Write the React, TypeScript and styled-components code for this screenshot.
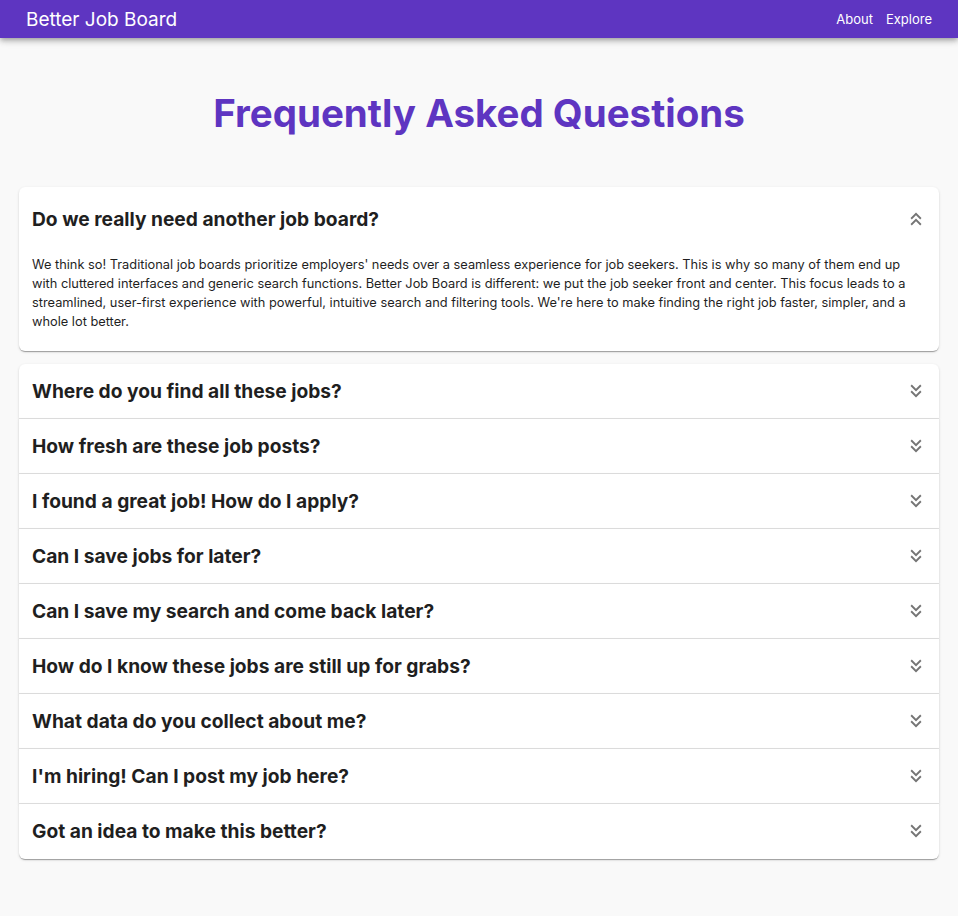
import { useState } from "react";
import styled, { createGlobalStyle } from "styled-components";

const GlobalStyle = createGlobalStyle`
  body {
    margin: 0;
    background: #f9f9f9;
    font-family: Inter, "Noto Sans", sans-serif;
    color: #1f1f1f;
  }
`;

const TopBar = styled.header`
  height: 38px;
  background: #5e35c1;
  color: #fff;
  display: flex;
  align-items: center;
  justify-content: space-between;
  padding: 0 26px;
  box-shadow: 0 2px 4px -1px rgba(0, 0, 0, 0.2), 0 4px 5px 0 rgba(0, 0, 0, 0.14),
    0 1px 10px 0 rgba(0, 0, 0, 0.12);
  position: relative;
  z-index: 2;
`;

const Brand = styled.div`
  font-size: 19px;
  font-weight: 400;
`;

const Nav = styled.nav`
  display: flex;
  gap: 13px;
  font-size: 13px;
`;

const NavLink = styled.a`
  color: #fff;
  text-decoration: none;
`;

const Main = styled.main`
  padding: 0 19px 40px;
`;

const Heading = styled.h1`
  margin: 0;
  padding: 52px 0 51px;
  text-align: center;
  color: #5e35c1;
  font-size: 38.5px;
  font-weight: 700;
  line-height: 46px;
`;

const List = styled.div`
  display: flex;
  flex-direction: column;
`;

const Panel = styled.div<{ $open: boolean; $first: boolean; $last: boolean }>`
  background: #fff;
  position: relative;
  box-shadow: 0 2px 1px -1px rgba(0, 0, 0, 0.2), 0 1px 1px 0 rgba(0, 0, 0, 0.14),
    0 1px 3px 0 rgba(0, 0, 0, 0.12);
  border-radius: ${(p) =>
    p.$open ? "6px" : p.$first && p.$last ? "6px" : p.$first ? "6px 6px 0 0" : p.$last ? "0 0 6px 6px" : "0"};
  margin-bottom: ${(p) => (p.$open ? "13px" : "0")};

  &::before {
    content: "";
    position: absolute;
    left: 0;
    right: 0;
    top: -1px;
    height: 1px;
    background: rgba(0, 0, 0, 0.12);
    display: ${(p) => (p.$first || p.$open ? "none" : "block")};
  }
`;

const Summary = styled.button<{ $open: boolean }>`
  all: unset;
  box-sizing: border-box;
  width: 100%;
  display: flex;
  align-items: center;
  justify-content: space-between;
  padding: 0 12px 2px 13px;
  height: ${(p) => (p.$open ? "66px" : "55px")};
  cursor: pointer;
`;

const Question = styled.span`
  font-size: 19.2px;
  font-weight: 700;
  color: #1f1f1f;
`;

const Answer = styled.div`
  padding: 2px 19px 20px 13px;
  font-size: 12.8px;
  line-height: 19px;
  color: #1f1f1f;
`;

const Chevrons = ({ up }: { up: boolean }) => (
  <svg width="22" height="22" viewBox="0 0 24 24" fill="#757575">
    {up ? (
      <path d="M6 17.59 7.41 19 12 14.42 16.59 19 18 17.59l-6-6z M6 11l1.41 1.41L12 7.83l4.59 4.58L18 11l-6-6z" />
    ) : (
      <path d="M18 6.41 16.59 5 12 9.58 7.41 5 6 6.41l6 6z M18 13l-1.41-1.41L12 16.170l-4.59-4.58L6 13l6 6z" />
    )}
  </svg>
);

const faqs = [
  {
    q: "Do we really need another job board?",
    a: "We think so! Traditional job boards prioritize employers' needs over a seamless experience for job seekers. This is why so many of them end up with cluttered interfaces and generic search functions. Better Job Board is different: we put the job seeker front and center. This focus leads to a streamlined, user-first experience with powerful, intuitive search and filtering tools. We're here to make finding the right job faster, simpler, and a whole lot better.",
  },
  { q: "Where do you find all these jobs?", a: "" },
  { q: "How fresh are these job posts?", a: "" },
  { q: "I found a great job! How do I apply?", a: "" },
  { q: "Can I save jobs for later?", a: "" },
  { q: "Can I save my search and come back later?", a: "" },
  { q: "How do I know these jobs are still up for grabs?", a: "" },
  { q: "What data do you collect about me?", a: "" },
  { q: "I'm hiring! Can I post my job here?", a: "" },
  { q: "Got an idea to make this better?", a: "" },
];

export default function App() {
  const [open, setOpen] = useState(0);

  return (
    <>
      <GlobalStyle />
      <TopBar>
        <Brand>Better Job Board</Brand>
        <Nav>
          <NavLink href="#">About</NavLink>
          <NavLink href="#">Explore</NavLink>
        </Nav>
      </TopBar>
      <Main>
        <Heading>Frequently Asked Questions</Heading>
        <List>
          {faqs.map((f, i) => {
            const isOpen = open === i;
            const first = i === 0 || open === i - 1;
            const last = i === faqs.length - 1 || open === i + 1;
            return (
              <Panel key={f.q} $open={isOpen} $first={first} $last={last}>
                <Summary $open={isOpen} onClick={() => setOpen(isOpen ? -1 : i)}>
                  <Question>{f.q}</Question>
                  <Chevrons up={isOpen} />
                </Summary>
                {isOpen && <Answer>{f.a}</Answer>}
              </Panel>
            );
          })}
        </List>
      </Main>
    </>
  );
}
